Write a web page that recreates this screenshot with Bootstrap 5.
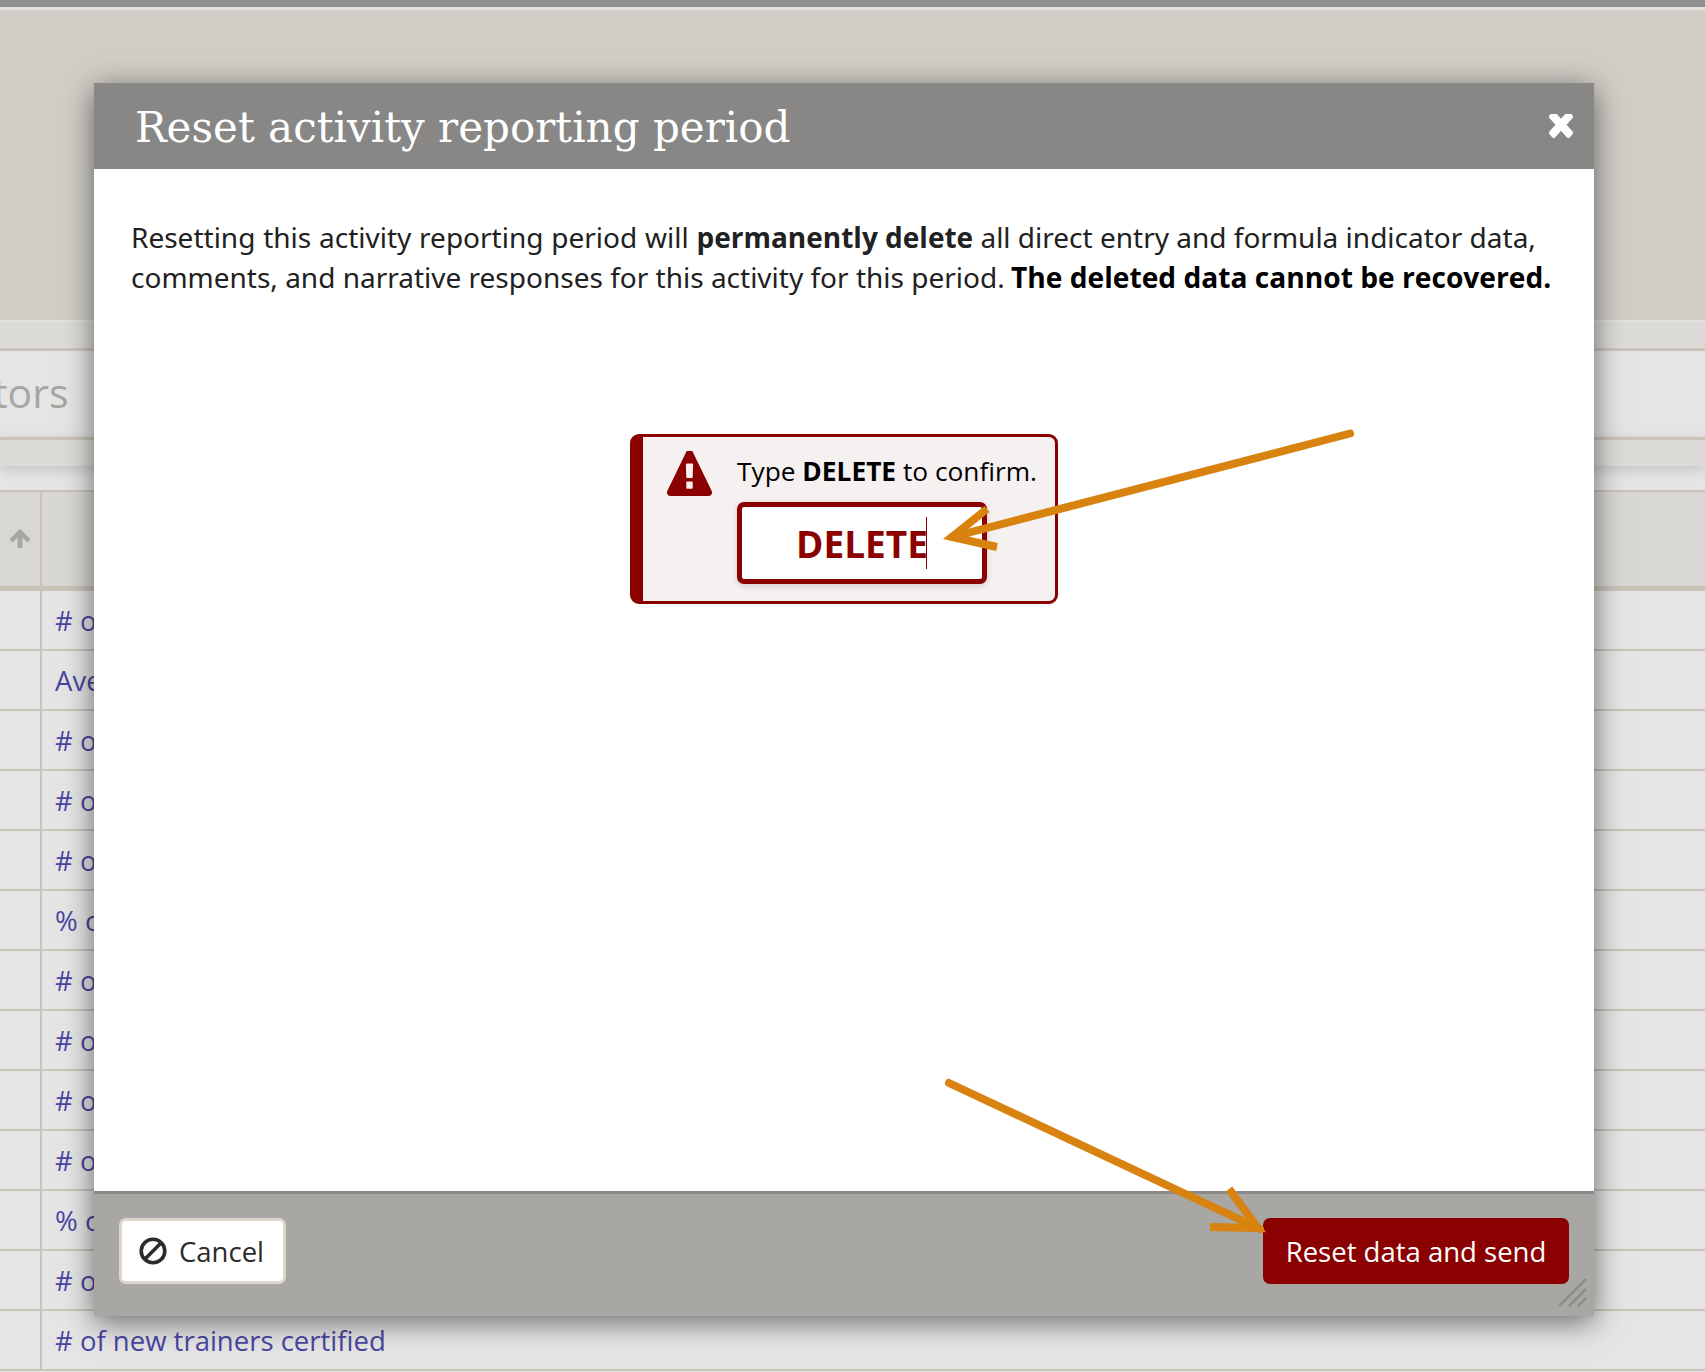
<!DOCTYPE html>
<html lang="en">
<head>
<meta charset="utf-8">
<title>Reset activity reporting period</title>
<link rel="stylesheet" href="https://cdn.jsdelivr.net/npm/bootstrap@5.3.0/dist/css/bootstrap.min.css">
<style>
html,body{margin:0;height:1372px;overflow:hidden}
body{font-family:"Open Sans","Noto Sans",sans-serif;font-size:27.5px;background:#e5e5e5;color:#212121;position:relative;width:1705px}
.topbar{height:7px;background:#8f8f8d}
.topline{height:3px;background:#e4e3df}
.hero{height:310px;background:#d1cec7}
.strip{background:#dddbd7;border-top:2px solid #e3e2df;border-bottom:3px solid #cac4ba;box-sizing:content-box;height:26px}
.tabband{height:86px;background:#e5e5e5;display:flex;align-items:center;overflow:hidden}
.tabtext{font-size:41px;color:#a8a6a2;line-height:1;padding-bottom:3px;margin-left:-7px}
.strip2{height:29px;background:#dddbd7;border-top:3px solid #cac4ba;box-shadow:0 4px 14px rgba(0,0,0,.14);position:relative}
.gapband{height:24px;background:#e5e5e5}
.thead-row{height:101px;display:flex;background:#d9d7d3;border-top:2px solid #c9c4ba;border-bottom:5px solid #c9c4ba}
.cell-a{width:42px;flex:none;border-right:2px solid #c9c4ba;display:flex;align-items:center;justify-content:center;padding-right:1px}
.arrow-up{width:20px;height:20px;fill:#a9a7a3;display:block}
.data-row{height:60px;display:flex;border-bottom:2px solid #c9c4ba;background:#e5e5e5}
.cell-b{padding-left:13px;color:#4a46a1;line-height:60px;white-space:nowrap}
.dlg{position:absolute;left:94px;top:83px;width:1500px;height:1233px;border:0;border-radius:0;box-shadow:0 6px 28px rgba(0,0,0,.55);background:#fff;overflow:hidden}
.dlg-head{height:86px;background:#888785;padding:0 21px 0 41px;display:flex;justify-content:space-between;align-items:center}
.dlg-title{font-family:"DejaVu Serif",serif;font-weight:400;font-size:42px;color:#fff;margin:0;line-height:1;white-space:nowrap;padding-top:3px}
.close-x{width:24px;height:24px;fill:#fff;display:block}
.dlg-body{padding:48px 37px 0;flex:1 1 auto}
.dlg-text{line-height:40px;margin:0 0 137px;white-space:nowrap;font-family:"Noto Sans",sans-serif;font-size:28px}
.dlg-text b{font-family:"Open Sans",sans-serif}
.dlg-text b.strong-a{color:#212121}
.dlg-text b.strong-b{color:#000;font-size:28.170px;margin-left:-1px}
.spaced{word-spacing:.5px}
.confirm-box{width:428px;height:170px;margin:0 auto;background:#f6f1f1;border:3px solid #8b0000;border-left-width:13px;border-radius:9px;padding:14px 18px 15px 24px;display:flex;gap:25px;color:#000}
.warn{width:45px;height:45px;fill:#8b0000;flex:none;display:block}
.confirm-line{line-height:40px;white-space:nowrap;font-size:26.3px}
.confirm-input-wrap{position:relative;width:250px;margin-top:11px}
.confirm-input{height:82px;width:250px;border:5px solid #8b0000;border-radius:7px;background:#fff;color:#8b0000;font-weight:700;font-size:37px;text-align:center;padding:0;box-shadow:0 2px 6px rgba(0,0,0,.15);font-family:"Open Sans",sans-serif}
.caret-bar{position:absolute;left:189px;top:15px;width:1px;height:52px;background:#8b0000}
.dlg-foot{height:125px;background:#a9a7a4;border-top:3px solid #8b8a88;border-radius:0;padding:0 25px;display:flex;justify-content:space-between;align-items:flex-start;position:relative;flex-wrap:nowrap;margin:0}
.btn-cancel{height:66px;width:167px;margin:24px 0 0;background:#fff;border:3px solid #dcd6cc;border-radius:7px;color:#2b2b2b;font-size:27.500px;padding:0 0 0 17px;display:flex;align-items:center;gap:12px;line-height:1}
.btn-cancel:hover{background:#fff}
.btn-label{padding-top:2px}
.ban{width:28px;height:28px;display:block;flex:none}
.btn-reset{height:66px;width:306px;margin:24px 0 0;background:#8b0000;border:0;border-radius:7px;color:#fff;font-size:27.500px;padding:2px 0 0;line-height:1}
.grip{position:absolute;right:6px;bottom:8px;width:30px;height:30px;display:block}
.marks{position:absolute;left:0;top:0;width:1705px;height:1372px;pointer-events:none}
</style>
</head>
<body>
<div class="topbar"></div>
<div class="topline"></div>
<div class="hero"></div>
<div class="strip"></div>
<div class="tabband"><span class="tabtext">tors</span></div>
<div class="strip2"></div>
<div class="gapband"></div>
<div class="thead-row">
  <div class="cell-a"><svg class="arrow-up" viewBox="117 220 1558 1444"><path d="M1675 971q0 51-37 90l-75 75q-38 38-91 38-54 0-90-38l-294-293v704q0 52-37.500 84.500t-90.500 32.500h-128q-53 0-90.500-32.500t-37.500-84.500v-704l-294 293q-36 38-90 38t-90-38l-75-75q-38-38-38-90 0-53 38-91l651-651q35-37 90-37 54 0 91 37l651 651q37 39 37 91z"/></svg></div>
</div>
<div class="data-row"><div class="cell-a"></div><div class="cell-b"># of</div></div>
<div class="data-row"><div class="cell-a"></div><div class="cell-b">Average</div></div>
<div class="data-row"><div class="cell-a"></div><div class="cell-b"># of</div></div>
<div class="data-row"><div class="cell-a"></div><div class="cell-b"># of</div></div>
<div class="data-row"><div class="cell-a"></div><div class="cell-b"># of</div></div>
<div class="data-row"><div class="cell-a"></div><div class="cell-b">% of</div></div>
<div class="data-row"><div class="cell-a"></div><div class="cell-b"># of</div></div>
<div class="data-row"><div class="cell-a"></div><div class="cell-b"># of</div></div>
<div class="data-row"><div class="cell-a"></div><div class="cell-b"># of</div></div>
<div class="data-row"><div class="cell-a"></div><div class="cell-b"># of</div></div>
<div class="data-row"><div class="cell-a"></div><div class="cell-b">% of</div></div>
<div class="data-row"><div class="cell-a"></div><div class="cell-b"># of</div></div>
<div class="data-row"><div class="cell-a"></div><div class="cell-b"># of new trainers certified</div></div>

<div class="dlg modal-content d-flex flex-column">
  <div class="dlg-head">
    <h1 class="dlg-title">Reset activity reporting period</h1>
    <svg class="close-x" viewBox="110 358 1188 1076" preserveAspectRatio="none"><path d="M1298 1202q0 40-28 68l-136 136q-28 28-68 28t-68-28l-294-294-294 294q-28 28-68 28t-68-28l-136-136q-28-28-28-68t28-68l294-294-294-294q-28-28-28-68t28-68l136-136q28-28 68-28t68 28l294 294 294-294q28-28 68-28t68 28l136 136q28 28 28 68t-28 68l-294 294 294 294q28 28 28 68z"/></svg>
  </div>
  <div class="dlg-body">
    <p class="dlg-text"><span class="spaced">Resetting this activity reporting period will </span><b class="strong-a">permanently delete</b> all direct entry and formula indicator data,<br>comments, and narrative responses for this activity for this period. <b class="strong-b">The deleted data cannot be recovered.</b></p>
    <div class="confirm-box">
      <svg class="warn" viewBox="0 0 1792 1600" preserveAspectRatio="none"><path d="M1024 1375v-190q0-14-9.500-23.500t-22.500-9.500h-192q-13 0-22.500 9.500t-9.500 23.500v190q0 14 9.500 23.500t22.500 9.500h192q13 0 22.500-9.500t9.500-23.500zm-2-374l18-459q0-12-10-19-13-11-24-11h-220q-11 0-24 11-10 7-10 21l17 457q0 10 10 16.500t24 6.500h185q14 0 23.500-6.500t10.500-16.500zm-14-934l768 1408q35 63-2 126-17 29-46.500 46t-63.500 17h-1536q-34 0-63.500-17t-46.500-46q-37-63-2-126l768-1408q17-31 47-49t65-18 65 18 47 49z" transform="translate(0 -64)"/></svg>
      <div>
        <div class="confirm-line">Type <b>DELETE</b> to confirm.</div>
        <div class="confirm-input-wrap">
          <input class="form-control confirm-input" type="text" value="DELETE" aria-label="Type DELETE to confirm">
          <span class="caret-bar"></span>
        </div>
      </div>
    </div>
  </div>
  <div class="dlg-foot modal-footer">
    <button type="button" class="btn btn-cancel"><svg class="ban" viewBox="0 0 28 28"><circle cx="14" cy="14" r="11.800" fill="none" stroke="#2b2b2b" stroke-width="3.600"/><line x1="22.500" y1="5.500" x2="5.500" y2="22.500" stroke="#2b2b2b" stroke-width="3.600"/></svg><span class="btn-label">Cancel</span></button>
    <button type="button" class="btn btn-reset">Reset data and send</button>
    <svg class="grip" viewBox="0 0 30 30"><g stroke="#8f8d8a" stroke-width="2.500" fill="none"><line x1="28" y1="1" x2="1" y2="28"/><line x1="28" y1="11" x2="11" y2="28"/><line x1="28" y1="20" x2="20" y2="28"/></g></svg>
  </div>
</div>

<svg class="marks" viewBox="0 0 1705 1372">
  <g fill="none" stroke="#d8820f" stroke-width="8">
    <path d="M1350 433.500L952 537" stroke-linecap="round"/>
    <path d="M987 509L952 537L997 547"/>
    <path d="M949 1083L1260 1229" stroke-linecap="round"/>
    <path d="M1229 1189L1258 1228L1210 1227"/>
  </g>
</svg>
</body>
</html>
